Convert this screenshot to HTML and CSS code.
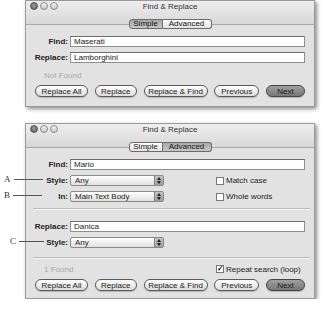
FILE: index.html
```html
<!DOCTYPE html>
<html lang="en">
<head>
    <meta charset="UTF-8">
    <title>Find &amp; Replace</title>
    <link rel="stylesheet" href="styles.css">
</head>
<body>
    <div class="window simple-win">
        <div class="titlebar">
            <div class="lights">
                <span class="light close"></span>
                <span class="light"></span>
                <span class="light"></span>
            </div>
            <div class="title">Find &amp; Replace</div>
        </div>
        <div class="tabs">
            <span class="tab active">Simple</span>
            <span class="tab">Advanced</span>
        </div>
        <div class="form">
            <div class="row">
                <span class="label">Find:</span>
                <div class="field">Maserati</div>
            </div>
            <div class="row">
                <span class="label">Replace:</span>
                <div class="field">Lamborghini</div>
            </div>
        </div>
        <div class="status">
            <span class="dim">Not Found</span>
        </div>
        <div class="buttons">
            <button class="btn w-all">Replace All</button>
            <button class="btn w-rep">Replace</button>
            <button class="btn w-rf">Replace &amp; Find</button>
            <button class="btn w-prev">Previous</button>
            <button class="btn default w-next">Next</button>
        </div>
    </div>

    <div class="window advanced-win">
        <div class="titlebar">
            <div class="lights">
                <span class="light close"></span>
                <span class="light"></span>
                <span class="light"></span>
            </div>
            <div class="title">Find &amp; Replace</div>
        </div>
        <div class="tabs">
            <span class="tab">Simple</span>
            <span class="tab active">Advanced</span>
        </div>
        <div class="form">
            <div class="row">
                <span class="label">Find:</span>
                <div class="field">Mario</div>
            </div>
            <div class="row">
                <span class="callout">A<i></i></span>
                <span class="label">Style:</span>
                <div class="popup">Any<span class="stepper"></span></div>
                <label class="check"><span class="box"></span>Match case</label>
            </div>
            <div class="row">
                <span class="callout">B<i></i></span>
                <span class="label">In:</span>
                <div class="popup">Main Text Body<span class="stepper"></span></div>
                <label class="check"><span class="box"></span>Whole words</label>
            </div>
        </div>
        <hr class="sep">
        <div class="form replace-part">
            <div class="row">
                <span class="label">Replace:</span>
                <div class="field">Danica</div>
            </div>
            <div class="row">
                <span class="callout c">C<i></i></span>
                <span class="label">Style:</span>
                <div class="popup">Any<span class="stepper"></span></div>
            </div>
        </div>
        <hr class="sep">
        <div class="status">
            <span class="dim found">1 Found</span>
            <label class="check loop"><span class="box checked">&#10003;</span>Repeat search (loop)</label>
        </div>
        <div class="buttons">
            <button class="btn w-all">Replace All</button>
            <button class="btn w-rep">Replace</button>
            <button class="btn w-rf">Replace &amp; Find</button>
            <button class="btn w-prev">Previous</button>
            <button class="btn default w-next">Next</button>
        </div>
    </div>
</body>
</html>
```
FILE: styles.css
```css
body {
    margin: 0;
    background-color: #fff;
    font-family: "Liberation Sans", Arial, sans-serif;
    font-size: 8px;
    color: #222;
}

.window {
    width: 288px;
    margin-left: 25px;
    background-color: #e2e2e2;
    border: 1px solid #9a9a9a;
    box-shadow: 2px 2px 4px rgba(0, 0, 0, 0.45);
}

.simple-win {
    padding-bottom: 9px;
}

.advanced-win {
    margin-top: 16px;
    padding-bottom: 7px;
}

.titlebar {
    position: relative;
    height: 23px;
    background: linear-gradient(#eeeeee, #d8d8d8);
    border-bottom: 1px solid #a8a8a8;
}

.lights {
    display: flex;
    gap: 2px;
    padding: 1px 0 0 4px;
}

.light {
    width: 6px;
    height: 6px;
    border-radius: 50%;
    border: 1px solid #8a8a8a;
    background: linear-gradient(#f4f4f4, #c8c8c8);
}

.light.close {
    background: radial-gradient(circle at 50% 40%, #9a9a9a, #5c5c5c);
    border-color: #555;
}

.title {
    position: absolute;
    top: 1px;
    left: 0;
    right: 0;
    text-align: center;
    font-size: 8px;
    color: #333;
}

.tabs {
    position: relative; /* paint above the title bar it overlaps */
    display: flex;
    justify-content: center;
    margin-top: -6px;
}

.tab {
    box-sizing: border-box;
    height: 10px;
    line-height: 8px;
    border: 1px solid #6c6c6c;
    background: linear-gradient(#ffffff, #e2e2e2);
    color: #111;
    text-align: center;
}

.tab:first-child {
    width: 34px;
    border-radius: 3px 0 0 3px;
}

.tab:last-child {
    width: 49px;
    border-left: none;
    border-radius: 0 3px 3px 0;
}

.tab.active {
    background: linear-gradient(#a8a8a8, #c8c8c8);
}

.form {
    display: flex;
    flex-direction: column;
    gap: 5px;
    padding: 7px 9px 0 8px;
}

.row {
    position: relative;
    display: flex;
    align-items: center;
    height: 11px;
}

.label {
    width: 34px;
    margin-right: 2px;
    text-align: right;
    font-weight: bold;
    white-space: nowrap;
}

.field {
    flex: 1;
    height: 9px;
    line-height: 9px;
    padding-left: 3px;
    background-color: #fff;
    border: 1px solid #8e8e8e;
    border-top-color: #6e6e6e;
}

.popup {
    position: relative;
    width: 88px;
    height: 9px;
    line-height: 9px;
    padding-left: 4px;
    background: linear-gradient(#ffffff, #e0e0e0);
    border: 1px solid #8a8a8a;
    border-radius: 2px;
}

.stepper {
    position: absolute;
    top: 0;
    right: 0;
    width: 8px;
    height: 9px;
    background: linear-gradient(#c4c4c4, #9c9c9c);
    border-left: 1px solid #888;
}

.stepper::before,
.stepper::after {
    content: "";
    position: absolute;
    left: 2px;
    border-left: 2px solid transparent;
    border-right: 2px solid transparent;
}

.stepper::before {
    top: 1px;
    border-bottom: 3px solid #222;
}

.stepper::after {
    bottom: 1px;
    border-top: 3px solid #222;
}

.check {
    display: flex;
    align-items: center;
    gap: 2px;
    margin-left: 52px;
    white-space: nowrap;
}

.box {
    width: 6px;
    height: 6px;
    line-height: 6px;
    font-size: 8px;
    text-align: center;
    background-color: #fff;
    border: 1px solid #777;
}

.box.checked {
    font-weight: bold;
    color: #111;
}

.callout {
    position: absolute;
    left: -30px;
    top: -1px;
    display: flex;
    align-items: center;
    gap: 3px;
    font-family: "Liberation Serif", "Times New Roman", serif;
    font-size: 9px;
    color: #333;
}

.callout i {
    display: block;
    width: 29px;
    border-top: 1px solid #555;
}

.callout.c {
    left: -24px;
}

.callout.c i {
    width: 25px;
}

.sep {
    height: 0;
    margin: 6px 4px 0 7px;
    border: none;
    border-top: 1px solid #bdbdbd;
    border-bottom: 1px solid #f2f2f2;
}

.replace-part {
    padding-top: 11px;
}

.replace-part + .sep {
    margin-top: 9px;
}

.status {
    display: flex;
    align-items: center;
    height: 10px;
    padding: 7px 0 0 18px;
    white-space: nowrap;
}

.advanced-win .status {
    padding-top: 5px;
}

.dim {
    color: #a9a9a9;
}

.found {
    width: 30px;
}

.loop {
    margin-left: 142px;
}

.buttons {
    display: flex;
    justify-content: space-between;
    padding: 5px 9px 0 9px;
}

.btn {
    height: 12px;
    padding: 0;
    font-family: "Liberation Sans", Arial, sans-serif;
    font-size: 8px;
    color: #1a1a1a;
    background: linear-gradient(#ffffff, #dcdcdc);
    border: 1px solid #5a5a5a;
    border-radius: 6px;
    box-shadow: 0 1px 1px rgba(0, 0, 0, 0.2);
}

.btn.default {
    background: linear-gradient(#a0a0a0, #777777);
    border-color: #444;
}

.w-all { width: 53px; }
.w-rep { width: 42px; }
.w-rf { width: 64px; }
.w-prev { width: 45px; }
.w-next { width: 39px; }
```
